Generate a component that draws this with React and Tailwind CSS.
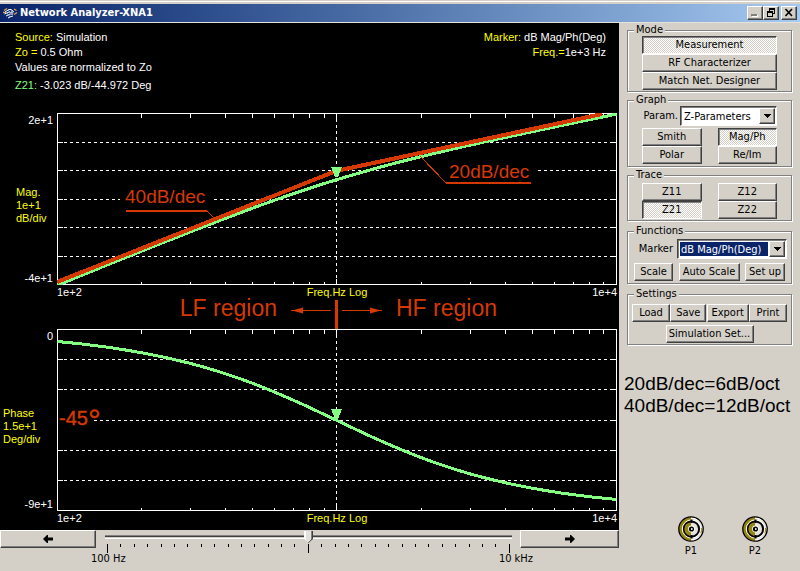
import { useState } from "react";
import clsx from "clsx";

const PLOT_WIDTH = 560;
const MINOR_TICKS = [2, 3, 4, 5, 6, 7, 8, 9];
const RAISED =
    "border border-t-white border-l-white border-b-[#404040] border-r-[#404040] shadow-[inset_-1px_-1px_0_#808080]";
const SUNKEN =
    "border border-t-[#404040] border-l-[#404040] border-b-white border-r-white shadow-[inset_1px_1px_0_#808080]";

// x position of a frequency, normalised to the corner (0.1 .. 10)
function xOf(f) {
    return 0.5 + ((Math.log10(f) + 1) / 2) * (PLOT_WIDTH - 1);
}

function curve(fn) {
    const points = [];
    for (let i = 0; i <= 80; i++) {
        const f = Math.pow(10, -1 + i / 40);
        points.push(`${xOf(f).toFixed(1)},${fn(f).toFixed(1)}`);
    }
    return points.join(" ");
}

const magCurve = curve((f) => {
    const db = 40 * Math.log10(f) - 10 * Math.log10(1 + f * f);
    return ((20 - db) / 60) * 171 + 1;
});

const phaseCurve = curve((f) => ((Math.atan(f) * 180) / Math.PI / 90) * 181 + 1);

function Grid({ height }) {
    const bottom = height - 1;
    const mid = Math.floor(PLOT_WIDTH / 2) - 1;
    const ticks = [0.1, 1].flatMap((d) => MINOR_TICKS.map((n) => Math.floor(xOf(d * n))));

    return (
        <g stroke="#fff" strokeWidth="1" fill="none">
            {[1, 2, 3, 4, 5].map((i) => {
                const y = Math.round((i * bottom) / 6) + 0.5;
                return (
                    <g key={i}>
                        <line x1="1" x2="558" y1={y} y2={y} strokeDasharray="3 3" />
                        <line x1="1" x2="6" y1={y} y2={y} />
                        <line x1="553" x2="559" y1={y} y2={y} />
                    </g>
                );
            })}
            {ticks.map((x) => (
                <path key={x} d={`M${x + 0.5} 0v5M${x + 0.5} ${height}v-3`} />
            ))}
            <line x1={mid + 0.5} x2={mid + 0.5} y1="0" y2={height} strokeDasharray="3 3" />
            <path d={`M${mid + 0.5} 0v6M${mid + 0.5} ${height}v-6`} />
            <rect x="0.5" y="0.5" width={PLOT_WIDTH - 1} height={bottom} />
        </g>
    );
}

function MagnitudePlot() {
    return (
        <svg viewBox="0 0 560 172" className="block w-full h-auto" shapeRendering="crispEdges">
            <Grid height={172} />
            <rect x="63" y="78" width="92" height="14" fill="#000" />
            <rect x="370" y="50" width="111" height="14" fill="#000" />
            <polyline points={magCurve} fill="none" stroke="#84ff84" strokeWidth="3" />
            <polyline points="0,169 279,58 545,1" fill="none" stroke="#d63900" strokeWidth="4" />
            <path d="M69 98H150" stroke="#d63900" strokeWidth="2" />
            <path d="M150 98L158 106M363 43L389 70" stroke="#d63900" strokeWidth="1" fill="none" />
            <path d="M389 70H474" stroke="#d63900" strokeWidth="2" />
            <path d="M274 54H285L281 64H278Z" fill="#84ff84" />
            <text x="68" y="90" fill="#d63900" fontSize="19">40dB/dec</text>
            <text x="392" y="65" fill="#d63900" fontSize="19">20dB/dec</text>
        </svg>
    );
}

function PhasePlot() {
    return (
        <svg viewBox="0 0 560 182" className="block w-full h-auto" shapeRendering="crispEdges">
            <Grid height={182} />
            <rect x="1" y="82" width="34" height="16" fill="#000" />
            <polyline points={phaseCurve} fill="none" stroke="#84ff84" strokeWidth="3" />
            <path d="M274 80H285L281 90H278Z" fill="#84ff84" />
            <text x="2" y="96" fill="#d63900" stroke="#d63900" strokeWidth="0.4" fontSize="20">
                -45<tspan fontSize="32" dy="6">°</tspan>
            </text>
        </svg>
    );
}

function AxisColumn({ top, bottom, lines, className }) {
    return (
        <div className="w-[57px] shrink-0 flex flex-col justify-between">
            <p className="pr-1 pt-px text-right leading-[13px]">{top}</p>
            <p className={clsx("text-[#ff0] leading-[13px] pt-3", className)}>
                {lines.map((line) => (
                    <span key={line} className="block whitespace-nowrap">{line}</span>
                ))}
            </p>
            <p className="pr-1 text-right leading-[13px]">{bottom}</p>
        </div>
    );
}

function FrequencyScale() {
    return (
        <div className="grid grid-cols-3 leading-[15px]">
            <span>1e+2</span>
            <span className="text-center text-[#ff0]">Freq.Hz Log</span>
            <span className="text-right">1e+4</span>
        </div>
    );
}

function RegionArrow({ flip }) {
    return (
        <svg width="40" height="9" viewBox="0 0 40 9" className={clsx("mt-1.5 shrink-0", flip && "-scale-x-100")}>
            <path d="M0 4.5H40" stroke="#d63900" />
            <path d="M28 1.5L39 4.5L28 7.5Z" fill="#d63900" />
        </svg>
    );
}

function RegionRow() {
    return (
        <div className="h-[29px] flex pr-px text-[#d63900] text-[23px] leading-4 whitespace-nowrap">
            <div className="flex-1 flex justify-end gap-3.5 pr-1">
                <span>LF region</span>
                <RegionArrow flip />
            </div>
            <div className="w-[3px] bg-[#d63900]" />
            <div className="flex-1 flex gap-3.5 pl-1">
                <RegionArrow />
                <span>HF region</span>
            </div>
        </div>
    );
}

function TitleBar() {
    return (
        <header className="border-t border-[#d4d0c8] bg-[#d4d0c8]">
            <div className="border-t border-white pt-0.5">
                <div className="h-[18px] flex items-center bg-linear-to-r from-[#0a246a] to-[#a6caf0] pl-0.5 pr-[3px]">
                    <svg width="16" height="12" viewBox="0 0 16 12" fill="none" strokeWidth="1">
                        <path d="M5 1.5L2 3.5M1 5.5H4" stroke="#e0a040" strokeWidth="1.4" />
                        <path d="M12 2L14.5 3.5M12 7.5L15 5.5" stroke="#e0a040" strokeWidth="1.4" />
                        <path d="M3 5L7 2.5H9L11 4M2.5 7L7 5L9 5.5L12 4.5M4 9L8 7L11 7M6 11L9 9.5L11 9" stroke="#fff" />
                        <path d="M6 3L9 6M5 6L8 10M9 3L11 7" stroke="#8fb4d8" />
                    </svg>
                    <h1 className="flex-1 pl-0.5 text-white font-bold whitespace-nowrap">Network Analyzer-XNA1</h1>
                    <div className="flex">
                        <button type="button" aria-label="Minimize" className={clsx("w-4 h-3.5 bg-[#d4d0c8]", RAISED)}>
                            <svg width="14" height="12" viewBox="0 0 14 12" shapeRendering="crispEdges">
                                <path d="M4 10H10V8H4Z" fill="#fff" />
                                <path d="M3 9H9V7H3Z" fill="#808080" />
                            </svg>
                        </button>
                        <button type="button" aria-label="Restore" className={clsx("w-4 h-3.5 bg-[#d4d0c8]", RAISED)}>
                            <svg width="14" height="12" viewBox="0 0 14 12" shapeRendering="crispEdges">
                                <path d="M5 1h6v2h-6zM10 3h1v4h-2v-1h1zM5 3h1v1h-1zM3 4h6v2h-6zM3 6h1v4h-1zM8 6h1v4h-1zM3 9h6v1h-6z" fill="#000" />
                            </svg>
                        </button>
                        <button type="button" aria-label="Close" className={clsx("ml-0.5 w-4 h-3.5 bg-[#d4d0c8]", RAISED)}>
                            <svg width="14" height="12" viewBox="0 0 14 12">
                                <path d="M3.5 2L10 9M10 2L3.5 9" stroke="#000" strokeWidth="1.6" />
                            </svg>
                        </button>
                    </div>
                </div>
            </div>
            <div className="h-px bg-[#e4e2dc]" />
        </header>
    );
}

function PanelButton({ pressed, className, children, ...props }) {
    return (
        <button
            type="button"
            className={clsx(
                "h-[18px] leading-4 text-center whitespace-nowrap",
                pressed
                    ? "bg-[repeating-conic-gradient(#fff_0_25%,#d4d0c8_0_50%)] bg-[length:2px_2px]"
                    : "bg-[#d4d0c8]",
                pressed ? SUNKEN : RAISED,
                className
            )}
            {...props}
        >
            {children}
        </button>
    );
}

function Group({ title, className, children }) {
    return (
        <fieldset className="min-w-0 border border-[#808080] shadow-[1px_1px_0_#fff,inset_1px_1px_0_#fff]">
            <legend className="ml-1.5 px-0.5 leading-3 bg-[#d4d0c8]">{title}</legend>
            <div className={className}>{children}</div>
        </fieldset>
    );
}

function Combo({ id, options, active, className }) {
    return (
        <div className={clsx("h-5 flex bg-white p-px", SUNKEN, className)}>
            <select
                id={id}
                className={clsx(
                    "flex-1 min-w-0 m-px appearance-none outline-none pl-px leading-4",
                    active ? "bg-[#0a246a] text-white" : "bg-white text-black"
                )}
            >
                {options.map((o) => (
                    <option key={o}>{o}</option>
                ))}
            </select>
            <span aria-hidden="true" className={clsx("w-4 flex items-center justify-center bg-[#d4d0c8]", RAISED)}>
                <svg width="7" height="4" viewBox="0 0 7 4" shapeRendering="crispEdges">
                    <path d="M0 0H7L4 4H3Z" />
                </svg>
            </span>
        </div>
    );
}

function Port({ label }) {
    return (
        <div className="w-[26px] flex flex-col items-center gap-0.5">
            <svg width="26" height="26" viewBox="0 0 26 26">
                <circle cx="13" cy="13" r="12" fill="#e4e2dc" />
                <path d="M13 1a12 12 0 0 0 0 24z" fill="#948410" />
                <path d="M13 2a11 11 0 0 1 8 3M13 24a11 11 0 0 0 8-3" stroke="#fff" strokeWidth="1.5" fill="none" />
                <path d="M22.5 17a10 10 0 0 0 .8-5" stroke="#948410" strokeWidth="1.5" fill="none" />
                <circle cx="13" cy="13" r="12.2" fill="none" stroke="#000" strokeWidth="1.3" />
                <circle cx="13.5" cy="13" r="9.2" fill="none" stroke="#fff" strokeWidth="1" />
                <circle cx="13.5" cy="13" r="7.6" fill="#e4e2dc" stroke="#000" strokeWidth="2" />
                <path d="M13 6.4a6.6 6.6 0 0 0 0 13.2z" fill="#948410" />
                <path d="M13.5 3.5v3.5M13.5 19v3.5" stroke="#000" strokeWidth="2" />
                <circle cx="13.5" cy="13" r="3.4" fill="#fff" />
                <circle cx="13.5" cy="13" r="2.6" fill="#000" />
                <circle cx="13.8" cy="13" r="0.9" fill="#fff" />
            </svg>
            <span className="leading-[14px]">{label}</span>
        </div>
    );
}

function ArrowIcon({ flip }) {
    return (
        <svg width="10" height="8" viewBox="0 0 10 8" className={clsx("mx-auto", flip && "-scale-x-100")}>
            <path d="M0 2.5H5V0H6L10 4L6 8H5V5.5H0Z" />
        </svg>
    );
}

function FrequencySlider() {
    const [position, setPosition] = useState(15);

    return (
        <div className="h-[42px] text-black">
            <div className="flex items-start">
                <PanelButton
                    aria-label="Lower frequency"
                    className="w-24"
                    onClick={() => setPosition((p) => Math.max(0, p - 1))}
                >
                    <ArrowIcon flip />
                </PanelButton>
                <div className="flex-1 min-w-0 pl-[9px] pr-2">
                    <input
                        type="range"
                        aria-label="Marker frequency"
                        min="0"
                        max="30"
                        value={position}
                        onChange={(e) => setPosition(Number(e.target.value))}
                        className="block w-full h-3.5 appearance-none bg-transparent [&::-webkit-slider-runnable-track]:h-1 [&::-webkit-slider-runnable-track]:bg-[linear-gradient(#808080_0_1px,#404040_1px_2px,#d4d0c8_2px_3px,#fff_3px)] [&::-webkit-slider-thumb]:appearance-none [&::-webkit-slider-thumb]:w-[9px] [&::-webkit-slider-thumb]:h-3 [&::-webkit-slider-thumb]:-mt-1 [&::-webkit-slider-thumb]:bg-[linear-gradient(135deg,transparent_75%,#505050_75%),linear-gradient(to_right,#fff_0_2px,#e4e2dc_2px_7px,#808080_7px_8px,#404040_8px)] [&::-webkit-slider-thumb]:[clip-path:polygon(0_0,100%_0,100%_65%,50%_100%,0_65%)]"
                    />
                    <div className="flex justify-between px-0.5">
                        {Array.from({ length: 31 }, (_, i) => (
                            <span key={i} className={clsx("w-px bg-black", i % 15 === 0 ? "h-[9px]" : "h-[3px]")} />
                        ))}
                    </div>
                </div>
                <PanelButton
                    aria-label="Raise frequency"
                    className="w-[99px]"
                    onClick={() => setPosition((p) => Math.min(30, p + 1))}
                >
                    <ArrowIcon />
                </PanelButton>
            </div>
            <div className="flex justify-between pl-[91px] pr-[86px] leading-3">
                <span>100 Hz</span>
                <span>10 kHz</span>
            </div>
        </div>
    );
}

export default function App() {
    const [mode, setMode] = useState("Measurement");
    const [graph, setGraph] = useState("Mag/Ph");
    const [trace, setTrace] = useState("Z21");

    return (
        <div className="min-h-screen flex flex-col bg-[#d4d0c8] text-black text-[11px] font-['DejaVu_Sans_Condensed','DejaVu_Sans',sans-serif]">
            <TitleBar />
            <div className="flex-1 flex">
                <main className="flex-1 min-w-0">
                    <section className="bg-black text-white font-['Liberation_Sans',Arial,sans-serif] pr-0.5 pb-1">
                        <div className="h-[90px] flex justify-between pl-[15px] pr-[11px] pt-[7px] leading-[15px]">
                            <div>
                                <p><span className="text-[#ff0]">Source:</span> Simulation</p>
                                <p><span className="text-[#ff0]">Zo =</span> 0.5 Ohm</p>
                                <p>Values are normalized to Zo</p>
                                <p className="mt-[3px]"><span className="text-[#84ff84]">Z21:</span> -3.023 dB/-44.972 Deg</p>
                            </div>
                            <div className="text-right">
                                <p><span className="text-[#ff0]">Marker:</span> dB Mag/Ph(Deg)</p>
                                <p><span className="text-[#ff0]">Freq.=</span>1e+3 Hz</p>
                            </div>
                        </div>
                        <div className="flex">
                            <AxisColumn top="2e+1" bottom="-4e+1" lines={["Mag.", "1e+1", "dB/div"]} className="pl-4" />
                            <div className="flex-1 min-w-0"><MagnitudePlot /></div>
                        </div>
                        <div className="pl-[57px]">
                            <FrequencyScale />
                            <RegionRow />
                        </div>
                        <div className="flex">
                            <AxisColumn top="0" bottom="-9e+1" lines={["Phase", "1.5e+1", "Deg/div"]} className="pl-[3px]" />
                            <div className="flex-1 min-w-0"><PhasePlot /></div>
                        </div>
                        <div className="pl-[57px]">
                            <FrequencyScale />
                        </div>
                    </section>
                    <FrequencySlider />
                </main>

                <aside className="w-[181px] shrink-0 flex flex-col">
                    <div className="flex flex-col gap-0.5 px-2 pt-px">
                        <Group title="Mode" className="flex flex-col px-3.5 pb-px">
                            {["Measurement", "RF Characterizer", "Match Net. Designer"].map((m) => (
                                <PanelButton key={m} pressed={mode === m} onClick={() => setMode(m)}>{m}</PanelButton>
                            ))}
                        </Group>
                        <Group title="Graph" className="px-3.5 pb-0.5">
                            <div className="flex items-center justify-end gap-0.5">
                                <label htmlFor="param">Param.</label>
                                <Combo id="param" className="w-[97px] shrink-0" options={["Z-Parameters", "Y-Parameters", "S-Parameters"]} />
                            </div>
                            <div className="mt-0.5 grid grid-cols-2 gap-x-4">
                                {["Smith", "Mag/Ph", "Polar", "Re/Im"].map((g) => (
                                    <PanelButton key={g} pressed={graph === g} onClick={() => setGraph(g)}>{g}</PanelButton>
                                ))}
                            </div>
                        </Group>
                        <Group title="Trace" className="grid grid-cols-2 gap-x-4 px-3.5 pt-0.5 pb-px">
                            {["Z11", "Z12", "Z21", "Z22"].map((t) => (
                                <PanelButton key={t} pressed={trace === t} onClick={() => setTrace(t)}>{t}</PanelButton>
                            ))}
                        </Group>
                        <div className="pt-0.5">
                            <Group title="Functions" className="px-1 pt-0.5 pb-0.5">
                                <div className="flex items-center justify-end gap-1">
                                    <label htmlFor="marker">Marker</label>
                                    <Combo id="marker" active className="w-[110px] shrink-0" options={["dB Mag/Ph(Deg)", "Mag/Ph(Deg)", "Re/Im"]} />
                                </div>
                                <div className="mt-1 flex justify-between px-0.5">
                                    <PanelButton className="w-[39px]">Scale</PanelButton>
                                    <PanelButton className="w-[61px]">Auto Scale</PanelButton>
                                    <PanelButton className="w-10">Set up</PanelButton>
                                </div>
                            </Group>
                        </div>
                        <div className="pt-0.5">
                            <Group title="Settings" className="px-1 pt-1 pb-px">
                                <div className="flex justify-between">
                                    <PanelButton className="w-[38px]">Load</PanelButton>
                                    <PanelButton className="w-[36px]">Save</PanelButton>
                                    <PanelButton className="w-[42px]">Export</PanelButton>
                                    <PanelButton className="w-[38px]">Print</PanelButton>
                                </div>
                                <div className="mt-[3px] flex justify-center">
                                    <PanelButton className="w-[88px]">Simulation Set...</PanelButton>
                                </div>
                            </Group>
                        </div>
                    </div>
                    <div className="mt-7 pl-[5px] text-[19px] leading-[22px] whitespace-nowrap font-['Liberation_Sans',Arial,sans-serif]">
                        <p>20dB/dec=6dB/oct</p>
                        <p>40dB/dec=12dB/oct</p>
                    </div>
                    <div className="mt-auto flex justify-center gap-[38px] pb-[14px] pl-[27px]">
                        <Port label="P1" />
                        <Port label="P2" />
                    </div>
                </aside>
            </div>
        </div>
    );
}
